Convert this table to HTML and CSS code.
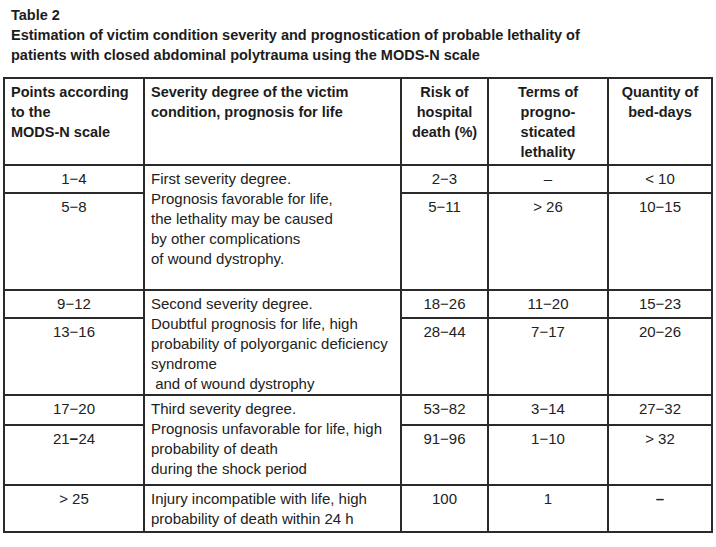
FILE: index.html
```html
<!DOCTYPE html>
<html>
<head>
<meta charset="utf-8">
<link rel="stylesheet" href="styles.css">
</head>
<body>
<div class="page">
  <div class="caption">
    <div>Table 2</div>
    <div>Estimation of victim condition severity and prognostication of probable lethality of<br>patients with closed abdominal polytrauma using the MODS-N scale</div>
  </div>
  <table class="tbl">
    <colgroup>
      <col class="c1"><col class="c2"><col class="c3"><col class="c4"><col class="c5">
    </colgroup>
    <thead>
      <tr class="rh">
        <th class="left">Points according<br>to the<br>MODS-N scale</th>
        <th class="left">Severity degree of the victim<br>condition, prognosis for life</th>
        <th>Risk of<br>hospital<br>death (%)</th>
        <th>Terms of<br>progno-<br>sticated<br>lethality</th>
        <th>Quantity of<br>bed-days</th>
      </tr>
    </thead>
    <tbody>
      <tr class="r1">
        <td>1−4</td>
        <td class="left" rowspan="2">First severity degree.<br>Prognosis favorable for life,<br>the lethality may be caused<br>by other complications<br>of wound dystrophy.</td>
        <td>2−3</td><td>–</td><td>&lt; 10</td>
      </tr>
      <tr class="r2">
        <td>5−8</td><td>5−11</td><td>&gt; 26</td><td>10−15</td>
      </tr>
      <tr class="r3">
        <td>9−12</td>
        <td class="left" rowspan="2">Second severity degree.<br>Doubtful prognosis for life, high<br>probability of polyorganic deficiency<br>syndrome<br>&nbsp;and of wound dystrophy</td>
        <td>18−26</td><td>11−20</td><td>15−23</td>
      </tr>
      <tr class="r4">
        <td>13−16</td><td>28−44</td><td>7−17</td><td>20−26</td>
      </tr>
      <tr class="r5">
        <td>17−20</td>
        <td class="left" rowspan="2">Third severity degree.<br>Prognosis unfavorable for life, high<br>probability of death<br>during the shock period</td>
        <td>53−82</td><td>3−14</td><td>27−32</td>
      </tr>
      <tr class="r6">
        <td>21<b>−</b>24</td><td>91−96</td><td>1−10</td><td>&gt; 32</td>
      </tr>
      <tr class="r7">
        <td>&gt; 25</td>
        <td class="left">Injury incompatible with life, high<br>probability of death within 24 h</td>
        <td>100</td><td>1</td><td><b>–</b></td>
      </tr>
    </tbody>
  </table>
</div>
</body>
</html>
```
FILE: styles.css
```css
html, body {
  margin: 0;
  padding: 0;
  background: #ffffff;
}
body {
  font-family: "Liberation Sans", Arial, sans-serif;
  color: #222222;
}
.page {
  padding: 5px 0 0 3px;
}
.caption {
  padding-left: 8px;
  font-weight: bold;
  font-size: 14.5px;
  line-height: 20px;
  color: #1c1c1c;
}
.tbl {
  margin-top: 12px;
  border-collapse: collapse;
  table-layout: fixed;
  width: 708px;
  font-size: 15px;
  line-height: 20px;
}
.c1 { width: 140px; }
.c2 { width: 257px; }
.c3 { width: 87px; }
.c4 { width: 120px; }
.c5 { width: 104px; }
.tbl th, .tbl td {
  border: 2px solid #2a2a2a;
  padding: 3px 6px 0 6px;
  vertical-align: top;
  text-align: center;
  white-space: nowrap;
}
.tbl th {
  font-weight: bold;
  font-size: 14.5px;
  color: #1c1c1c;
}
.tbl .left {
  text-align: left;
}
.rh { height: 87px; }
.r1 { height: 28px; }
.r2 { height: 97px; }
.r3 { height: 27px; }
.r4 { height: 76px; }
.r5 { height: 30px; }
.r6 { height: 60px; }
.r7 { height: 47px; }
```
